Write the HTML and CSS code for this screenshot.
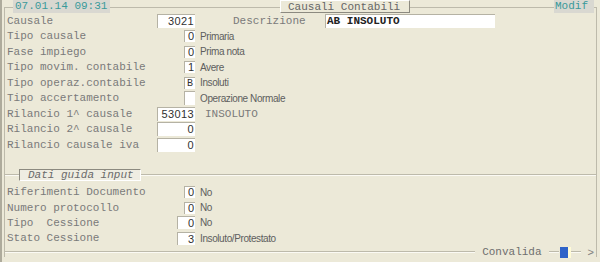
FILE: index.html
```html
<!DOCTYPE html>
<html>
<head>
    <meta name="viewport" content="width=device-width, initial-scale=1.0">
    <link rel="stylesheet" href="styles.css">
</head>
<body>
    <div class="screen">
        <div class="frame">
            <!-- Title bar on the frame edge -->
            <div class="header">
                <span class="clock">07.01.14 09:31</span>
                <span class="title">Causali Contabili</span>
                <span class="mode">Modif</span>
            </div>

            <!-- Main fields -->
            <div class="rows">
                <div class="row">
                    <div class="field"><span class="label">Causale</span><span class="input wide">3021</span></div>
                    <span class="label desc-label">Descrizione</span>
                    <span class="input text-input">AB INSOLUTO</span>
                </div>
                <div class="row">
                    <div class="field"><span class="label">Tipo causale</span><span class="input small">0</span></div>
                    <span class="note">Primaria</span>
                </div>
                <div class="row">
                    <div class="field"><span class="label">Fase impiego</span><span class="input small">0</span></div>
                    <span class="note">Prima nota</span>
                </div>
                <div class="row">
                    <div class="field"><span class="label">Tipo movim. contabile</span><span class="input small">1</span></div>
                    <span class="note">Avere</span>
                </div>
                <div class="row">
                    <div class="field"><span class="label">Tipo operaz.contabile</span><span class="input small mono">B</span></div>
                    <span class="note">Insoluti</span>
                </div>
                <div class="row">
                    <div class="field"><span class="label">Tipo accertamento</span><span class="input small tall"></span></div>
                    <span class="note">Operazione Normale</span>
                </div>
                <div class="row">
                    <div class="field"><span class="label">Rilancio 1^ causale</span><span class="input wide">53013</span></div>
                    <span class="label ref">INSOLUTO</span>
                </div>
                <div class="row">
                    <div class="field"><span class="label">Rilancio 2^ causale</span><span class="input wide">0</span></div>
                </div>
                <div class="row">
                    <div class="field"><span class="label">Rilancio causale iva</span><span class="input wide">0</span></div>
                </div>
            </div>

            <!-- Group: Dati guida input -->
            <div class="group">
                <span class="group-line short"></span>
                <span class="group-title">Dati guida input</span>
                <span class="group-line"></span>
            </div>
            <div class="rows lower">
                <div class="row">
                    <div class="field"><span class="label">Riferimenti Documento</span><span class="input small">0</span></div>
                    <span class="note">No</span>
                </div>
                <div class="row">
                    <div class="field"><span class="label">Numero protocollo</span><span class="input small">0</span></div>
                    <span class="note">No</span>
                </div>
                <div class="row">
                    <div class="field"><span class="label">Tipo  Cessione</span><span class="input medium">0</span></div>
                    <span class="note">No</span>
                </div>
                <div class="row">
                    <div class="field"><span class="label">Stato Cessione</span><span class="input medium">3</span></div>
                    <span class="note">Insoluto/Protestato</span>
                </div>
            </div>

            <!-- Footer -->
            <div class="footer">
                <span class="foot-line"></span>
                <span class="label confirm">Convalida</span>
                <span class="foot-line tiny"></span>
                <span class="cursor"></span>
                <span class="foot-line tiny"></span>
                <span class="arrow">&gt;</span>
            </div>
        </div>
    </div>
</body>
</html>
```

FILE: styles.css
```css
body {
    margin: 0;
    background-color: #ece9d8;
    font-family: "Liberation Mono", monospace;
    font-size: 11px;
    color: #7a7a7a;
}

.screen {
    width: 600px;
    height: 262px;
    box-sizing: border-box;
    border-left: 2px solid #aeab9c;
    padding-top: 7px;
    overflow: hidden;
}

/* Etched frame */
.frame {
    margin-left: 2px;
    margin-right: 3px;
    height: 250px;
    box-sizing: border-box;
    border: 1px solid #bdbaab;
    border-bottom: none;
    display: flex;
    flex-direction: column;
}

.header {
    display: flex;
    align-items: flex-start;
    height: 13px;
    margin-top: -8px;
    line-height: 13px;
}

.clock {
    margin-left: 8px;
    width: 97px;
    padding-left: 2px;
    box-sizing: border-box;
    background-color: #d9d8d1;
    color: #3a9a9a;
}

.title {
    margin-left: 170px;
    width: 130px;
    height: 13px;
    box-sizing: border-box;
    padding-left: 7px;
    background-color: #ece9d8;
    border-top: 1px solid #fff;
    border-left: 1px solid #fff;
    border-right: 1px solid #8c8a80;
    border-bottom: 1px solid #8c8a80;
    line-height: 12px;
    color: #666;
}

.mode {
    margin-left: auto;
    margin-right: 2px;
    width: 40px;
    padding-left: 1px;
    box-sizing: border-box;
    background-color: #d9d8d1;
    color: #3a9a9a;
}

/* Field rows */
.rows {
    display: flex;
    flex-direction: column;
}

.row {
    display: flex;
    align-items: center;
    height: 15.5px;
}

.lower .row {
    height: 15.4px;
}

.field {
    display: flex;
    align-items: center;
    width: 190px;
    padding-left: 2px;
    box-sizing: border-box;
}

.label {
    flex: 1;
    white-space: pre;
}

.input {
    height: 13px;
    box-sizing: border-box;
    background-color: #fff;
    border-top: 1px solid #b5b2a4;
    border-left: 1px solid #b5b2a4;
    font-family: "Liberation Sans", sans-serif;
    font-size: 11px;
    line-height: 12px;
    color: #303030;
    text-align: right;
    padding-right: 1px;
}

.wide {
    width: 38px;
    height: 14px;
    line-height: 13px;
    letter-spacing: 0.4px;
}

.small {
    width: 11px;
    height: 12px;
    line-height: 11px;
}

.medium {
    width: 18px;
}

.tall {
    height: 14px;
}

.mono {
    font-family: "Liberation Mono", monospace;
    font-size: 10px;
    text-align: center;
    padding-right: 0;
}

.desc-label {
    flex: none;
    margin-left: 38px;
    width: 92px;
}

.text-input {
    width: 170px;
    height: 14px;
    line-height: 13px;
    text-align: left;
    padding-left: 1px;
    font-family: "Liberation Mono", monospace;
    font-weight: bold;
    color: #222;
}

.ref {
    flex: none;
    margin-left: 10px;
}

.note {
    margin-left: 5px;
    font-family: "Liberation Sans", sans-serif;
    font-size: 10px;
    letter-spacing: -0.4px;
    color: #5e5e5e;
}

/* Group header */
.group {
    display: flex;
    align-items: center;
    margin-top: 16px;
    height: 12px;
}

.group-line {
    flex: 1;
    height: 0;
    border-top: 1px solid #bdbaab;
    border-bottom: 1px solid #fbfaf4;
}

.group-line.short {
    flex: none;
    width: 14px;
}

.group-title {
    width: 122px;
    height: 12px;
    box-sizing: border-box;
    padding-left: 8px;
    line-height: 11px;
    font-style: italic;
    color: #6a6a6a;
    background-color: #efede2;
    border-top: 1px solid #8c8a80;
    border-left: 1px solid #8c8a80;
    border-bottom: 1px solid #fff;
    border-right: 1px solid #fff;
}

.lower {
    margin-top: 4px;
}

/* Footer */
.footer {
    display: flex;
    align-items: center;
    margin-top: auto;
    margin-bottom: 3px;
    height: 12px;
}

.foot-line {
    flex: 1;
    height: 0;
    border-top: 1px solid #bdbaab;
    border-bottom: 1px solid #fbfaf4;
}

.foot-line.tiny {
    flex: none;
    width: 10px;
}

.confirm {
    flex: none;
    margin: 0 7px 0 7px;
    color: #6e6e6e;
}

.cursor {
    width: 8px;
    height: 11px;
    margin: 0 0 0 1px;
    background-color: #2f63c8;
    border-right: 3px solid #fffbd6;
}

.arrow {
    margin: 0 2px 0 7px;
    font-family: "Liberation Sans", sans-serif;
    font-size: 11px;
    color: #808080;
}
```
